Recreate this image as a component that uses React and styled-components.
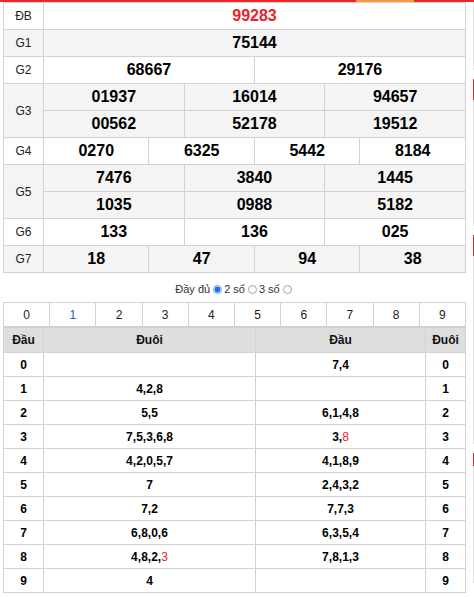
import { Fragment } from "react";
import styled, { createGlobalStyle } from "styled-components";

const GlobalStyle = createGlobalStyle`
  html, body {
    margin: 0;
    padding: 0;
    overflow: hidden;
    background: #fff;
  }
  body {
    font-family: "Liberation Sans", Arial, sans-serif;
  }
`;

const Strip = styled.div`
  display: flex;
  height: 2px;
`;

const StripPart = styled.span`
  flex: ${(p) => (p.$w ? `0 0 ${p.$w}px` : "1")};
  background: ${(p) => (p.$active ? "#f39a3f" : "#e8262b")};
`;

const Layout = styled.div`
  display: flex;
  align-items: flex-start;
  gap: 7px;
  padding-left: 3px;
`;

const Main = styled.main`
  width: 463px;
  flex-shrink: 0;
`;

const Side = styled.aside`
  flex: 1;
  min-width: 0;
  display: flex;
  flex-direction: column;
  gap: 9px;
  overflow: hidden;
`;

const Card = styled.div`
  display: flex;
  flex-direction: column;
  height: ${(p) => p.$h}px;
`;

const CardHead = styled.div`
  height: ${(p) => p.$h}px;
  background: #e8262b;
`;

const CardBody = styled.div`
  flex: 1;
  border-left: 1px solid #e2e2e2;
`;

const Sheet = styled.table`
  width: 463px;
  border-collapse: collapse;
  table-layout: fixed;
`;

const NarrowCol = styled.col`
  width: 40px;
`;

const WideCol = styled.col`
  width: ${(p) => p.$w}px;
`;

const Row = styled.tr`
  background: ${(p) => (p.$shade ? "#f4f4f4" : "#fff")};
`;

const Cell = styled.td`
  height: ${(p) => p.$h || 26}px;
  padding: 0;
  border: 1px solid #d2d2d2;
  text-align: center;
  vertical-align: middle;
`;

const Label = styled(Cell)`
  font-size: 12px;
  color: #222;
`;

const Num = styled(Cell)`
  font-size: 16px;
  font-weight: 700;
  color: ${(p) => (p.$red ? "#e8222e" : "#000")};
`;

const Mode = styled.div`
  display: flex;
  justify-content: center;
  align-items: center;
  height: 14px;
  margin: 9px 0 6px;
  font-size: 11px;
  color: #333;
`;

const Radio = styled.span`
  box-sizing: border-box;
  width: 9px;
  height: 9px;
  margin: 0 2px 0 3px;
  border-radius: 50%;
  border: 1px solid ${(p) => (p.$on ? "#6aa6e8" : "#a4a4a4")};
  background: ${(p) =>
    p.$on ? "radial-gradient(circle, #1f74e0 0 2.6px, #d6e7fa 3.2px)" : "#fff"};
`;

const DigitCell = styled(Cell)`
  font-size: 12px;
  color: ${(p) => (p.$link ? "#1f62c4" : "#222")};
`;

const Head = styled(Cell)`
  background: #dedede;
  font-size: 12px;
  font-weight: 700;
  color: #111;
`;

const Loto = styled(Cell)`
  font-size: 12px;
  font-weight: 700;
  color: #000;
`;

const Hot = styled.span`
  color: ${(p) => (p.$hot ? "#e8222e" : "inherit")};
  font-weight: ${(p) => (p.$hot ? 400 : 700)};
`;

const PRIZES = [
  { label: "ĐB", lines: [["99283"]] },
  { label: "G1", lines: [["75144"]] },
  { label: "G2", lines: [["68667", "29176"]] },
  { label: "G3", lines: [["01937", "16014", "94657"], ["00562", "52178", "19512"]] },
  { label: "G4", lines: [["0270", "6325", "5442", "8184"]] },
  { label: "G5", lines: [["7476", "3840", "1445"], ["1035", "0988", "5182"]] },
  { label: "G6", lines: [["133", "136", "025"]] },
  { label: "G7", lines: [["18", "47", "94", "38"]] },
];

const special = PRIZES[0].lines[0][0].slice(-2);
const ends = [...PRIZES.slice(1), PRIZES[0]]
  .flatMap((p) => p.lines.flat())
  .map((n) => n.slice(-2));

const digits = Array.from({ length: 10 }, (_, d) => String(d));

function DigitList({ items }) {
  return items.map((it, k) => (
    <Fragment key={k}>
      {k > 0 && ","}
      <Hot $hot={it.hot}>{it.d}</Hot>
    </Fragment>
  ));
}

export default function App() {
  return (
    <>
      <GlobalStyle />
      <Strip>
        <StripPart $w={356} />
        <StripPart $w={58} $active />
        <StripPart />
      </Strip>
      <Layout>
        <Main>
          <Sheet>
            <colgroup>
              <NarrowCol />
              {Array.from({ length: 12 }, (_, i) => (
                <col key={i} />
              ))}
            </colgroup>
            <tbody>
              {PRIZES.map((p, i) =>
                p.lines.map((line, j) => (
                  <Row key={`${p.label}-${j}`} $shade={i % 2 === 1}>
                    {j === 0 && <Label rowSpan={p.lines.length}>{p.label}</Label>}
                    {line.map((n) => (
                      <Num key={n} colSpan={12 / line.length} $red={i === 0}>
                        {n}
                      </Num>
                    ))}
                  </Row>
                ))
              )}
            </tbody>
          </Sheet>

          <Mode>
            Đầy đủ<Radio $on />2 số<Radio />3 số<Radio />
          </Mode>

          <Sheet>
            <tbody>
              <Row>
                {digits.map((d) => (
                  <DigitCell key={d} $h={23} $link={d === "1"}>
                    {d}
                  </DigitCell>
                ))}
              </Row>
            </tbody>
          </Sheet>

          <Sheet>
            <colgroup>
              <NarrowCol />
              <col />
              <WideCol $w={170} />
              <NarrowCol />
            </colgroup>
            <tbody>
              <Row>
                <Head $h={24}>Đầu</Head>
                <Head $h={24}>Đuôi</Head>
                <Head $h={24}>Đầu</Head>
                <Head $h={24}>Đuôi</Head>
              </Row>
              {digits.map((d) => {
                const tails = ends
                  .filter((e) => e[0] === d)
                  .map((e) => ({ d: e[1], hot: e === special }));
                const heads = ends
                  .filter((e) => e[1] === d)
                  .map((e) => ({ d: e[0], hot: e === special }));
                return (
                  <Row key={d}>
                    <Loto $h={23}>{d}</Loto>
                    <Loto $h={23}>
                      <DigitList items={tails} />
                    </Loto>
                    <Loto $h={23}>
                      <DigitList items={heads} />
                    </Loto>
                    <Loto $h={23}>{d}</Loto>
                  </Row>
                );
              })}
            </tbody>
          </Sheet>
        </Main>

        <Side>
          <Card $h={68}>
            <CardBody />
          </Card>
          <Card $h={147}>
            <CardHead $h={21} />
            <CardBody />
          </Card>
          <Card $h={209}>
            <CardHead $h={21} />
            <CardBody />
          </Card>
          <Card $h={130}>
            <CardHead $h={13} />
            <CardBody />
          </Card>
        </Side>
      </Layout>
    </>
  );
}
